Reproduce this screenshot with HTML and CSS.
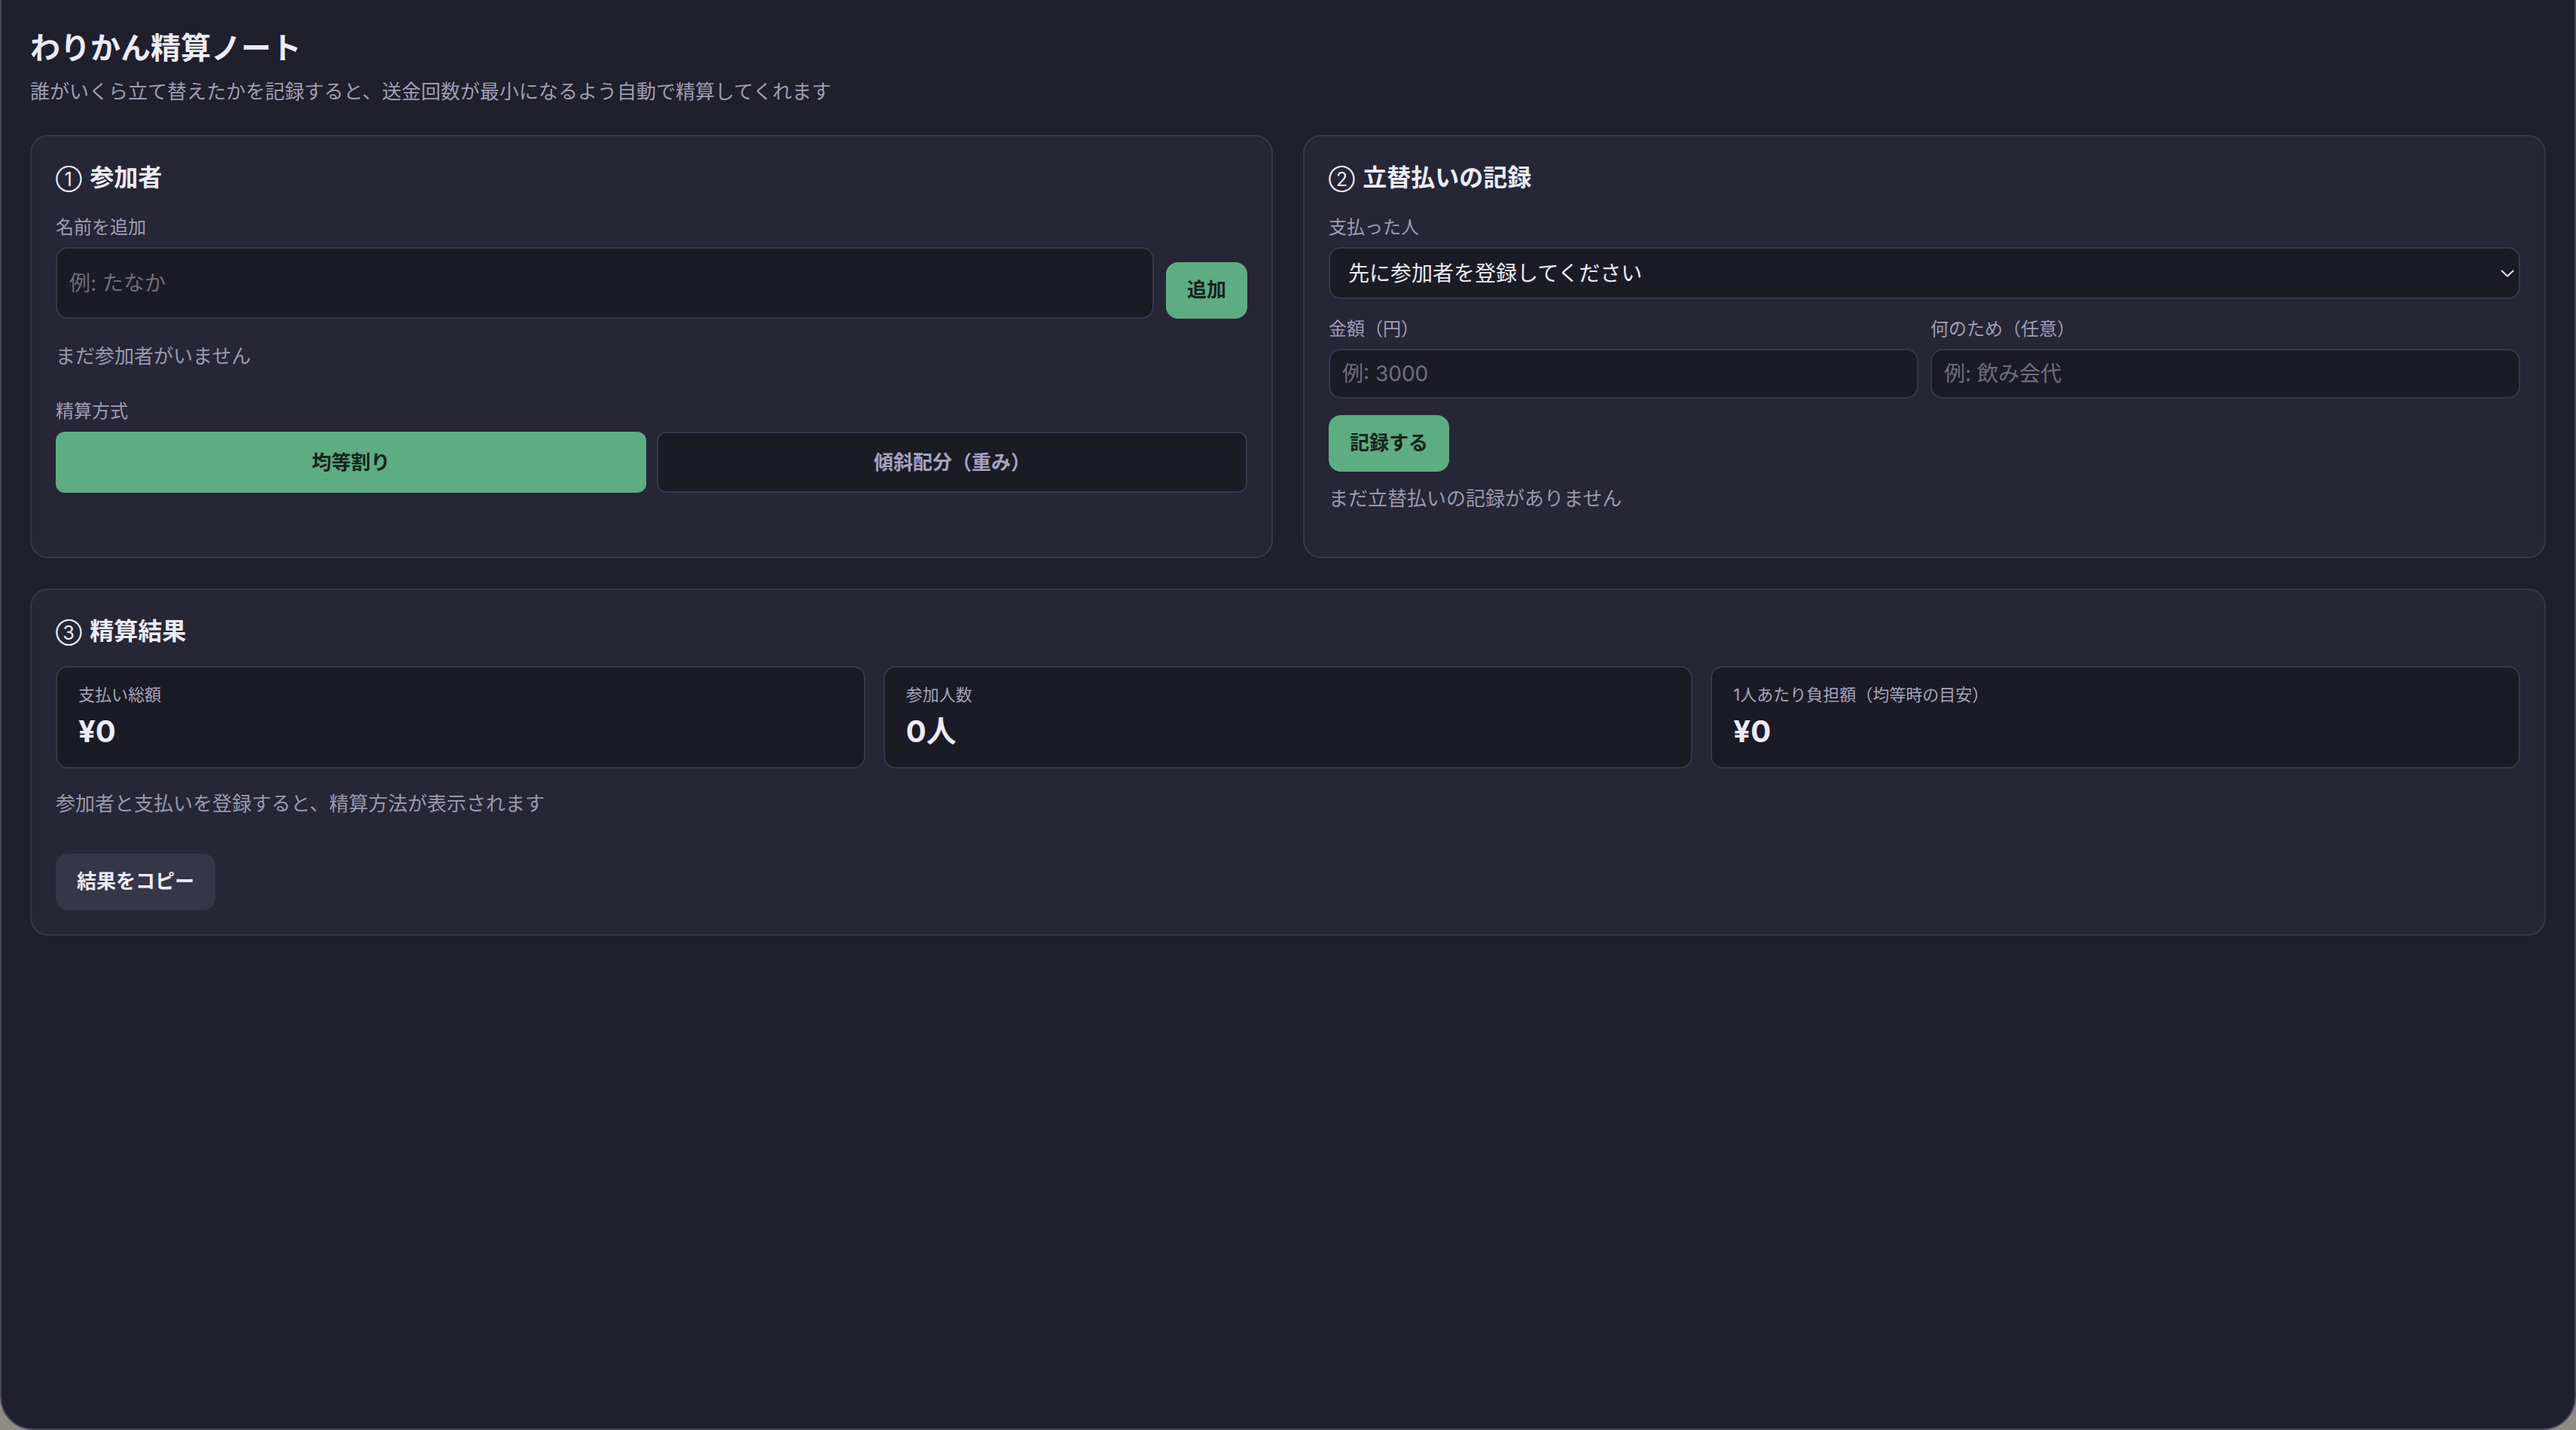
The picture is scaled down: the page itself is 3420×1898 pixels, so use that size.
FILE: index.html
```html
<!DOCTYPE html>
<html lang="ja">
<head>
    <meta charset="UTF-8">
    <meta name="viewport" content="width=device-width, initial-scale=1.0">
    <title>わりかん精算ノート</title>
    <link rel="stylesheet" href="styles.css">
</head>
<body>
    <header class="page-header">
        <h1>わりかん精算ノート</h1>
        <p class="lead">誰がいくら立て替えたかを記録すると、送金回数が最小になるよう自動で精算してくれます</p>
    </header>

    <main class="panels">
        <!-- 参加者 -->
        <section class="card">
            <h2 class="card-title"><span class="step">①</span> 参加者</h2>
            <label class="field-label" for="nameInput">名前を追加</label>
            <div class="add-row">
                <input id="nameInput" class="field field-tall" type="text" placeholder="例: たなか">
                <button class="btn btn-primary">追加</button>
            </div>
            <p class="empty empty-members">まだ参加者がいません</p>
            <div class="field-label mode-label">精算方式</div>
            <div class="mode-switch">
                <button class="mode active">均等割り</button>
                <button class="mode">傾斜配分（重み）</button>
            </div>
        </section>

        <!-- 立替払い -->
        <section class="card">
            <h2 class="card-title"><span class="step">②</span> 立替払いの記録</h2>
            <label class="field-label" for="payerSelect">支払った人</label>
            <div class="select-wrap">
                <select id="payerSelect" class="field select">
                    <option>先に参加者を登録してください</option>
                </select>
                <svg class="chevron" width="18" height="10" viewBox="0 0 18 10" aria-hidden="true">
                    <path d="M1.5 1.5 L9 8.5 L16.5 1.5" fill="none" stroke="#e4e3ec" stroke-width="2" stroke-linecap="round" stroke-linejoin="round"/>
                </svg>
            </div>
            <div class="pay-grid">
                <div>
                    <label class="field-label" for="amountInput">金額（円）</label>
                    <input id="amountInput" class="field" type="number" placeholder="例: 3000">
                </div>
                <div>
                    <label class="field-label" for="memoInput">何のため（任意）</label>
                    <input id="memoInput" class="field" type="text" placeholder="例: 飲み会代">
                </div>
            </div>
            <button class="btn btn-primary btn-record">記録する</button>
            <p class="empty empty-payments">まだ立替払いの記録がありません</p>
        </section>

        <!-- 精算結果 -->
        <section class="card card-wide">
            <h2 class="card-title"><span class="step">③</span> 精算結果</h2>
            <div class="stats">
                <div class="stat">
                    <div class="stat-label">支払い総額</div>
                    <div class="stat-value">¥0</div>
                </div>
                <div class="stat">
                    <div class="stat-label">参加人数</div>
                    <div class="stat-value">0人</div>
                </div>
                <div class="stat">
                    <div class="stat-label">1人あたり負担額（均等時の目安）</div>
                    <div class="stat-value">¥0</div>
                </div>
            </div>
            <p class="empty empty-result">参加者と支払いを登録すると、精算方法が表示されます</p>
            <button class="btn btn-secondary">結果をコピー</button>
        </section>
    </main>
</body>
</html>
```

FILE: styles.css
```css
/* --- 基本 --- */
html {
    background: #8f8b85;
}

body {
    margin: 0;
    min-height: 100vh;
    box-sizing: border-box;
    padding: 40px 38px 40px;
    background: #1f1f2d;
    border: 2px solid #46455a;
    border-top: none;
    border-radius: 0 0 44px 44px;
    color: #ecebf5;
    font-family: "Inter", "Noto Sans CJK JP", sans-serif;
}

.page-header h1 {
    margin: 0 0 14px;
    font-size: 40px;
    line-height: 48px;
    font-weight: 700;
}

.lead {
    margin: 0 0 38px;
    font-size: 26px;
    line-height: 39px;
    color: #9f9cb4;
}

/* --- パネル --- */
.panels {
    display: grid;
    grid-template-columns: 1fr 1fr;
    gap: 40px;
}

.card {
    background: #262637;
    border: 2px solid #37374c;
    border-radius: 24px;
    padding: 32px;
}

.card-wide {
    grid-column: 1 / -1;
}

.card-title {
    margin: 0 0 26px;
    font-size: 32px;
    line-height: 45px;
    font-weight: 700;
}

.card-wide .card-title {
    margin-bottom: 24px;
}

/* 丸数字は細めの線で */
.step {
    font-family: "Inter", sans-serif;
    font-weight: 400;
    font-size: 25px;
    line-height: 1;
    margin-right: 3px;
}

.field-label {
    display: block;
    margin-bottom: 8px;
    font-size: 24px;
    line-height: 36px;
    color: #a09db4;
}

/* --- 入力 --- */
.field {
    box-sizing: border-box;
    width: 100%;
    height: 66px;
    padding: 0 16px;
    font: inherit;
    font-size: 28px;
    color: #ecebf5;
    background: #1b1b26;
    border: 2px solid #37374c;
    border-radius: 16px;
    outline: none;
}

.field::placeholder {
    color: #6f6e79;
}

.field-tall {
    height: 95px;
}

.add-row {
    display: flex;
    align-items: flex-end;
    gap: 16px;
}

.add-row .field {
    flex: 1;
}

.select-wrap {
    position: relative;
}

.select {
    height: 69px;
    padding: 0 60px 0 24px;
    appearance: none;
    -webkit-appearance: none;
}

.chevron {
    position: absolute;
    right: 8px;
    top: 50%;
    margin-top: -5px;
    pointer-events: none;
}

.pay-grid {
    display: grid;
    grid-template-columns: 1fr 1fr;
    gap: 16px;
    margin-top: 22px;
}

/* --- ボタン --- */
.btn {
    font: inherit;
    font-size: 26px;
    line-height: 34px;
    font-weight: 700;
    padding: 20px 28px 21px;
    border: none;
    border-radius: 16px;
    cursor: pointer;
}

.btn-primary {
    background: #5eac82;
    color: #14241b;
}

.btn-secondary {
    background: #363649;
    color: #ecebf5;
    margin-top: 47px;
}

.btn-record {
    display: block;
    margin-top: 22px;
}

.mode-switch {
    display: grid;
    grid-template-columns: 1fr 1fr;
    gap: 14px;
}

.mode {
    font: inherit;
    font-size: 26px;
    line-height: 39px;
    font-weight: 700;
    padding: 19px 0;
    color: #a6a2c0;
    background: #1b1b26;
    border: 2px solid #37374c;
    border-radius: 12px;
    cursor: pointer;
}

.mode.active {
    background: #5eac82;
    border-color: #5eac82;
    color: #14241b;
}

/* --- テキスト --- */
.empty {
    margin: 0;
    font-size: 26px;
    line-height: 39px;
    color: #9a98ad;
}

.empty-members {
    margin: 30px 0 36px;
}

.mode-label {
    margin-bottom: 9px;
}

.empty-payments {
    margin: 16px 0 26px;
}

.empty-result {
    margin-top: 27px;
}

/* --- 集計 --- */
.stats {
    display: grid;
    grid-template-columns: repeat(3, 1fr);
    gap: 24px;
}

.stat {
    background: #1b1b26;
    border: 2px solid #37374c;
    border-radius: 16px;
    padding: 23px 28px 23px;
}

.stat-label {
    font-size: 22px;
    line-height: 26px;
    color: #a6a3bb;
    margin-bottom: 12px;
}

.stat-value {
    font-size: 40px;
    line-height: 48px;
    font-weight: 700;
}
```
